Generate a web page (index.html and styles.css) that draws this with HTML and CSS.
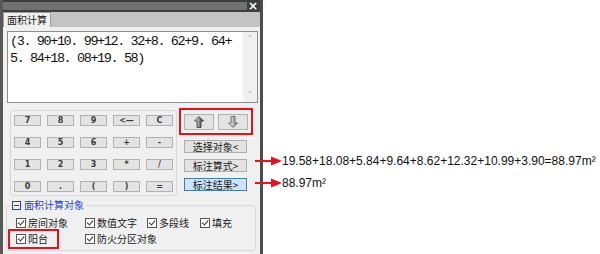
FILE: index.html
```html
<!DOCTYPE html>
<html lang="zh-cn">
<head>
    <meta charset="utf-8">
    <title>面积计算</title>
    <link rel="stylesheet" href="styles.css">
</head>
<body>
    <div class="page">
        <div class="panel">
            <div class="titlebar"><div class="grip"></div><span class="close">×</span></div>
            <div class="tabs"><div class="tab">面积计算</div></div>
            <div class="content">
                <div class="editor">
                    <div class="editor-text">(3. 90+10. 99+12. 32+8. 62+9. 64+<br>5. 84+18. 08+19. 58)</div>
                    <div class="scroll"><span>&#708;</span><span>&#709;</span></div>
                </div>
                <div class="middle">
                    <div class="keypad">
                        <div class="key">7</div><div class="key">8</div><div class="key">9</div><div class="key">&lt;—</div><div class="key">C</div>
                        <div class="key">4</div><div class="key">5</div><div class="key">6</div><div class="key">+</div><div class="key">-</div>
                        <div class="key">1</div><div class="key">2</div><div class="key">3</div><div class="key">*</div><div class="key">/</div>
                        <div class="key">0</div><div class="key">.</div><div class="key">(</div><div class="key">)</div><div class="key">=</div>
                    </div>
                    <div class="side">
                        <div class="move-row">
                            <div class="move-btn">
                                <svg width="10" height="12" viewBox="0 0 10 12"><defs><linearGradient id="gu" x1="0" x2="1"><stop offset="0" stop-color="#fff"/><stop offset="1" stop-color="#222"/></linearGradient></defs><polygon points="5,0.5 9.5,5 7,5 7,11.5 3,11.5 3,5 0.5,5" fill="url(#gu)" stroke="#333" stroke-width="0.8"/></svg>
                            </div>
                            <div class="move-btn">
                                <svg width="10" height="12" viewBox="0 0 10 12"><defs><linearGradient id="gd" x1="0" x2="1"><stop offset="0" stop-color="#fff"/><stop offset="1" stop-color="#777"/></linearGradient></defs><polygon points="5,11.5 9.5,7 7,7 7,0.5 3,0.5 3,7 0.5,7" fill="url(#gd)" stroke="#555" stroke-width="0.8"/></svg>
                            </div>
                        </div>
                        <div class="cmd">选择对象&lt;</div>
                        <div class="cmd">标注算式&gt;</div>
                        <div class="cmd cmd-active">标注结果&gt;</div>
                    </div>
                </div>
                <fieldset class="objects">
                    <legend><span class="fold"></span>面积计算对象</legend>
                    <div class="check-row">
                        <label class="check w1"><span class="box"></span>房间对象</label>
                        <label class="check w2"><span class="box"></span>数值文字</label>
                        <label class="check w3"><span class="box"></span>多段线</label>
                        <label class="check"><span class="box"></span>填充</label>
                    </div>
                    <div class="check-row">
                        <label class="check marked"><span class="box"></span>阳台</label>
                        <label class="check"><span class="box"></span>防火分区对象</label>
                    </div>
                </fieldset>
            </div>
        </div>
        <div class="notes">
            <div class="note"><svg class="arrow" width="27" height="10" viewBox="0 0 27 10"><line x1="0" y1="5" x2="18" y2="5" stroke="#e8101a" stroke-width="2"/><polygon points="16,0.5 27,5 16,9.5" fill="#e8101a"/></svg>19.58+18.08+5.84+9.64+8.62+12.32+10.99+3.90=88.97m²</div>
            <div class="note"><svg class="arrow" width="27" height="10" viewBox="0 0 27 10"><line x1="0" y1="5" x2="18" y2="5" stroke="#e8101a" stroke-width="2"/><polygon points="16,0.5 27,5 16,9.5" fill="#e8101a"/></svg>88.97m²</div>
        </div>
    </div>
</body>
</html>
```

FILE: styles.css
```css
html,body{
    margin: 0;
    background-color: white;
}
body{
    width: 600px;
    height: 254px;
    overflow: hidden;
    font-family: "Noto Sans CJK SC", sans-serif;
    color: #1a1a1a;
}
.page{
    display: flex;
    height: 254px;
}

/* panneau */
.panel{
    width: 257px;
    height: 254px;
    border-left: 3px solid #585858;
    border-right: 3px solid #4c4c4c;
    background-color: #f0f0f0;
    display: flex;
    flex-direction: column;
    flex-shrink: 0;
}
.titlebar{
    height: 12px;
    background-color: #3e3e3e;
    display: flex;
    align-items: center;
    padding: 0 1px 0 0;
}
.grip{
    flex: 1;
    height: 8px;
    background-image: radial-gradient(circle, #737373 0.7px, transparent 0.9px);
    background-size: 2px 2px;
}
.close{
    width: 12px;
    color: white;
    font: bold 12px "DejaVu Sans", sans-serif;
    line-height: 12px;
    text-align: center;
}
.tabs{
    height: 15px;
    background-color: #c3c3c3;
    display: flex;
    align-items: flex-end;
}
.tab{
    width: 46px;
    height: 14px;
    background-color: #f0f0f0;
    border: 1px solid #9c9c9c;
    border-bottom: none;
    font-size: 10px;
    line-height: 14px;
    text-align: center;
}
.content{
    flex: 1;
    display: flex;
    flex-direction: column;
}

/* zone de texte */
.editor{
    margin: 4px 2px 0 4px;
    height: 70px;
    border: 1px solid #8e8e8e;
    background-color: white;
    display: flex;
}
.editor-text{
    flex: 1;
    padding: 1px 0 0 2px;
    font: 13.5px "Liberation Mono", monospace;
    letter-spacing: -1.4px;
    line-height: 17px;
    white-space: pre;
    color: #111;
}
.scroll{
    width: 14px;
    background-color: #f0f0f0;
    display: flex;
    flex-direction: column;
    justify-content: space-between;
    align-items: center;
    color: #a8a8a8;
    font: 9px "DejaVu Sans", sans-serif;
    padding: 2px 0;
}

.middle{
    display: flex;
    margin-top: 5px;
    height: 88px;
}
.keypad{
    margin: 2px 0 0 7px;
    width: 162px;
    padding: 4px 0 3px 3px;
    border: 1px solid #d8d8d8;
    border-radius: 3px;
    display: grid;
    grid-template-columns: repeat(5, 27px);
    grid-auto-rows: 11px;
    column-gap: 6px;
    row-gap: 11px;
}
.key{
    background-color: #e3e3e3;
    border: 1px solid #b2b2b2;
    box-sizing: border-box;
    font: bold 8px "DejaVu Sans", sans-serif;
    line-height: 9px;
    text-align: center;
    color: #3a3a3a;
}
.side{
    margin-left: 2px;
    width: 74px;
    display: flex;
    flex-direction: column;
}
.move-row{
    height: 27px;
    box-sizing: border-box;
    border: 2px solid #e8101a;
    display: flex;
    align-items: center;
    padding: 0 0 0 3px;
    gap: 4px;
}
.move-btn{
    width: 30px;
    height: 16px;
    box-sizing: border-box;
    background-color: #e3e3e3;
    border: 1px solid #b2b2b2;
    display: flex;
    align-items: center;
    justify-content: center;
}
.cmd{
    margin: 5px 0 1px 5px;
    width: 63px;
    height: 13px;
    box-sizing: border-box;
    background-color: #e3e3e3;
    border: 1px solid #adadad;
    font-size: 10px;
    line-height: 11px;
    text-align: center;
}
.cmd-active{
    background-color: #cce4f7;
    border-color: #3c7fb1;
}

/* objets */
.objects{
    margin: 3px 4px 0 3px;
    padding: 4px 0 3px 9px;
    border: 1px solid #d8d8d8;
    border-radius: 3px;
}
.objects legend{
    padding: 0 2px 0 0;
    margin-left: -4px;
    font-size: 10px;
    line-height: 12px;
    color: #1f3fd0;
    display: flex;
    align-items: center;
    gap: 3px;
}
.fold{
    width: 7px;
    height: 7px;
    border: 1px solid #1f3fd0;
    background: linear-gradient(#1f3fd0, #1f3fd0) center / 5px 1px no-repeat;
}
.check-row{
    display: flex;
    height: 16px;
    align-items: center;
}
.check{
    display: flex;
    align-items: center;
    gap: 2px;
    font-size: 10px;
    line-height: 12px;
    flex-shrink: 0;
}
.w1{ width: 69px; }
.w2{ width: 62px; }
.w3{ width: 53px; }
.box{
    position: relative;
    width: 8px;
    height: 8px;
    border: 1px solid #555;
    background-color: white;
}
.box::after{
    content: "";
    position: absolute;
    left: 2px;
    top: 0;
    width: 3px;
    height: 5px;
    border: solid #333;
    border-width: 0 1px 1px 0;
    transform: rotate(40deg);
}
.marked{
    width: 41px;
    margin: 0 26px 0 -8px;
    padding: 2px 0 2px 6px;
    border: 2px solid #e8101a;
}

/* annotations */
.notes{
    margin-left: -8px;
    padding-top: 150px;
    font: 12px "Liberation Sans", Arial, sans-serif;
    color: #111;
}
.note{
    height: 22px;
    display: flex;
    align-items: center;
    white-space: nowrap;
}
```
